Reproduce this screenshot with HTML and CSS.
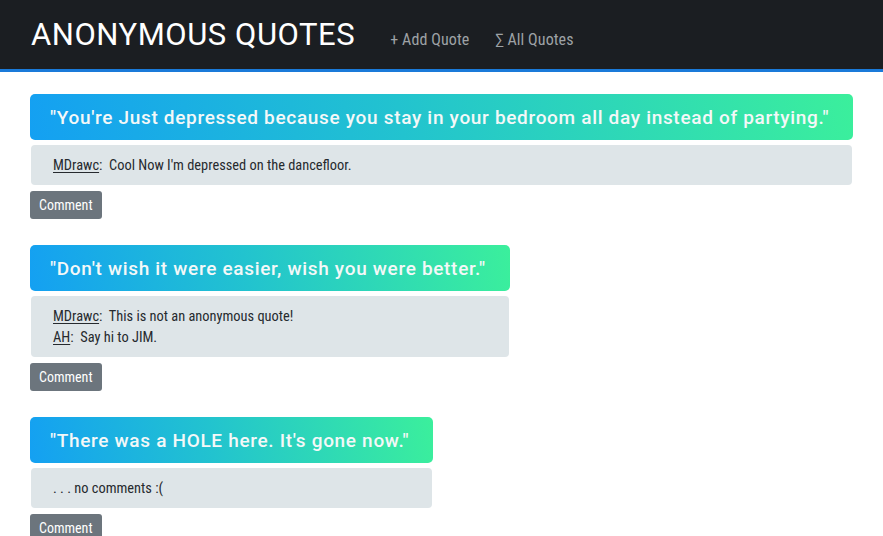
FILE: index.html
```html
<!DOCTYPE html>
<html>
<head>
<meta charset="utf-8">
<link rel="stylesheet" href="styles.css">
</head>
<body>
<nav class="navbar">
  <span class="brand">ANONYMOUS QUOTES</span>
  <a class="nav-link" href="#">+ Add Quote</a>
  <a class="nav-link" href="#">&sum; All Quotes</a>
</nav>
<main class="content">
  <section class="quote">
    <h2 class="quote-text">"You're Just depressed because you stay in your bedroom all day instead of partying."</h2>
    <div class="comments">
      <p class="comment"><u>MDrawc</u>:&nbsp; Cool Now I'm depressed on the dancefloor.</p>
    </div>
    <button class="btn">Comment</button>
  </section>
  <section class="quote">
    <h2 class="quote-text">"Don't wish it were easier, wish you were better."</h2>
    <div class="comments">
      <p class="comment"><u>MDrawc</u>:&nbsp; This is not an anonymous quote!</p>
      <p class="comment"><u>AH</u>:&nbsp; Say hi to JIM.</p>
    </div>
    <button class="btn">Comment</button>
  </section>
  <section class="quote">
    <h2 class="quote-text">"There was a HOLE here. It's gone now."</h2>
    <div class="comments">
      <p class="comment">. . . no comments :(</p>
    </div>
    <button class="btn">Comment</button>
  </section>
</main>
</body>
</html>
```
FILE: styles.css
```css
* { box-sizing: border-box; }
body {
  margin: 0;
  font-family: Roboto, "Liberation Sans", sans-serif;
  background: #fff;
  color: #212529;
}
.navbar {
  height: 72px;
  background: #1b1e22;
  border-bottom: 3px solid #1a7ad9;
  display: flex;
  align-items: center;
  padding: 0 0 0 31px;
}
.brand {
  color: #fff;
  font-size: 31px;
  font-weight: 400;
  letter-spacing: 0.55px;
  margin-right: 35px;
}
.nav-link {
  color: #9ea2a6;
  text-decoration: none;
  font-size: 16px;
  font-stretch: condensed;
  font-family: "Roboto Condensed", Roboto, sans-serif;
  letter-spacing: 0.1px;
  margin-right: 26px;
  padding-top: 10px;
}
.content {
  padding: 22px 30px 0;
}
.quote {
  display: flex;
  flex-direction: column;
  align-items: flex-start;
  width: fit-content;
  margin-bottom: 26px;
}
.quote-text {
  margin: 0;
  width: 100%;
  height: 46px;
  line-height: 47px;
  padding: 0 24px 0 20px;
  border-radius: 5px;
  background: linear-gradient(80deg, #14a0f2 0%, #22c3cf 45%, #3bef9c 100%);
  color: #f4f8f8;
  font-size: 19px;
  font-weight: 500;
  letter-spacing: 0.68px;
  white-space: nowrap;
}
.comments {
  margin: 5px 1px 0;
  align-self: stretch;
  background: #dee5e8;
  border-radius: 4px;
  padding: 10px 22px 9px;
}
.comment {
  margin: 0;
  font-family: "Roboto Condensed", Roboto, sans-serif;
  font-stretch: condensed;
  font-size: 14.4px;
  line-height: 21px;
  color: #262a2e;
}
.comment u { text-decoration-thickness: 1px; text-underline-offset: 2px; }
.btn {
  margin-top: 6px;
  background: #6c757d;
  color: #fff;
  border: none;
  border-radius: 3px;
  height: 28px;
  padding: 0 9px;
  font-family: "Roboto Condensed", Roboto, sans-serif;
  font-stretch: condensed;
  font-size: 14px;
}
```
